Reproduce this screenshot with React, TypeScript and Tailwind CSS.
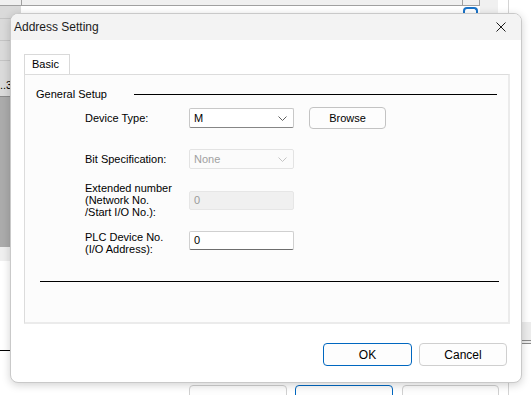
import React from "react";

const font = { fontFamily: '"Liberation Sans", Arial, sans-serif' };

const Chevron = ({ color }: { color: string }) => (
  <svg width="9" height="5" viewBox="0 0 9 5" className="shrink-0">
    <path d="M0.5 0.5 L4.5 4.5 L8.5 0.5" fill="none" stroke={color} strokeWidth="1" />
  </svg>
);

const Row = ({
  label,
  children,
  className = "",
}: {
  label: React.ReactNode;
  children: React.ReactNode;
  className?: string;
}) => (
  <div className={`flex ${className}`}>
    <div className="w-[104px] ml-[60px] leading-[12px] text-[11px] text-[#000]">{label}</div>
    {children}
  </div>
);

const Backdrop = () => (
  <>
    {/* top strip of the window behind */}
    <div className="absolute left-0 top-0 w-[480px] h-[6px] bg-[#f0f0f0] border-b border-[#a0a0a0]" />
    <div className="absolute left-[21px] top-0 w-px h-[6px] bg-[#a0a0a0]" />
    <div className="absolute left-[462px] top-0 w-px h-[6px] bg-[#a0a0a0]" />
    <div className="absolute left-[479px] top-0 w-px h-[6px] bg-[#a0a0a0]" />
    <div className="absolute left-[480px] top-0 w-[18px] h-[14px] bg-[#f0f0f0]" />
    <div className="absolute left-[463px] top-[7px] w-[15px] h-[12px] rounded-t-[4px] border-2 border-b-0 border-[#1a73c8]" />
    <div className="absolute left-[508px] top-0 w-px h-[14px] bg-[#d4d4d4]" />
    {/* left column */}
    <div className="absolute left-0 top-[6px] w-[21px] h-[91px] bg-[#dadada]" />
    <div className="absolute left-0 top-[18px] w-[21px] h-px bg-[#c4c4c4]" />
    <div className="absolute left-0 top-[40px] w-[21px] h-px bg-[#c4c4c4]" />
    <div className="absolute left-0 top-[60px] w-[21px] h-px bg-[#c4c4c4]" />
    <div className="absolute left-0 top-[96px] w-[21px] h-px bg-[#8a8a8a]" />
    <span className="absolute left-0 top-[79px] text-[11px] leading-[12px] text-black" style={font}>
      ..3
    </span>
    <div className="absolute left-0 top-[97px] w-[21px] h-[150px] bg-[#ababab]" />
    <div className="absolute left-0 top-[247px] w-[21px] h-[14px] bg-[#efefef]" />
    <div className="absolute left-0 top-[350px] w-[10px] h-px bg-black" />
    {/* right side pieces */}
    <div className="absolute left-[522px] top-[322px] w-[9px] h-[22px] bg-[#ececec]" />
    <div className="absolute left-[522px] top-[340px] w-[9px] h-px bg-[#8a8a8a]" />
    <div className="absolute left-[522px] top-[343px] w-[9px] h-px bg-[#8a8a8a]" />
    <div className="absolute left-[508px] top-[380px] w-px h-[15px] bg-[#d4d4d4]" />
    {/* buttons of the window behind */}
    <div className="absolute left-[189px] top-[385px] w-[98px] h-[14px] rounded-[4px] border border-[#d0d0d0] bg-[#fdfdfd]" />
    <div className="absolute left-[295px] top-[385px] w-[98px] h-[14px] rounded-[4px] border border-[#0067c0] bg-[#fdfdfd]" />
    <div className="absolute left-[402px] top-[385px] w-[97px] h-[14px] rounded-[4px] border border-[#d0d0d0] bg-[#fdfdfd]" />
  </>
);

export default function App() {
  return (
    <div className="relative w-[531px] h-[395px] bg-white overflow-hidden" style={font}>
      <Backdrop />

      {/* Dialog */}
      <div className="absolute left-[10px] top-[13px] w-[512px] h-[370px] rounded-[8px] border border-[#c9c9c9] bg-white shadow-[0_2px_8px_rgba(0,0,0,0.18)] overflow-hidden flex flex-col">
        {/* Title bar */}
        <div className="h-[26px] bg-[#f3f3f3] flex items-center pl-[3px] pr-[15px] shrink-0">
          <span className="text-[12px] text-[#1b1b1b]">Address Setting</span>
          <svg width="10" height="10" viewBox="0 0 10 10" className="ml-auto">
            <path d="M0.5 0.5 L9.5 9.5 M9.5 0.5 L0.5 9.5" stroke="#1b1b1b" strokeWidth="1" />
          </svg>
        </div>

        {/* Body */}
        <div className="flex-1 flex flex-col pl-[13px] pt-[14px]">
          {/* Tab */}
          <div className="w-[46px] h-[20px] border border-b-0 border-[#d9d9d9] bg-white flex items-center pl-[7px] text-[11px] text-black">
            Basic
          </div>

          {/* Tab panel */}
          <div className="w-[486px] h-[250px] border border-[#dcdcdc] border-r-2 border-b-2 border-r-[#ebebeb] border-b-[#ebebeb] bg-[#fcfcfc] flex flex-col pt-[11px] text-[11px]">
            {/* Group header */}
            <div className="flex items-center h-[16px]">
              <span className="w-[109px] pl-[11px] whitespace-nowrap text-black">General Setup</span>
              <div className="flex-1 h-px bg-black mr-[11px]" />
            </div>

            {/* Device Type */}
            <Row label="Device Type:" className="mt-[5px] items-center h-[22px]">
              <div className="w-[105px] h-[20px] bg-white border border-[#c8c8c8] border-b-[#868686] rounded-[2px] flex items-center pl-[4px] pr-[6px]">
                <span className="flex-1 text-black">M</span>
                <Chevron color="#5f5f5f" />
              </div>
              <button className="ml-[15px] w-[77px] h-[22px] rounded-[4px] border border-[#c3c3c3] bg-[#fdfdfd] text-[11px] text-black">
                Browse
              </button>
            </Row>

            {/* Bit Specification */}
            <Row label="Bit Specification:" className="mt-[20px] items-center h-[20px]">
              <div className="w-[105px] h-[20px] bg-[#fbfbfb] border border-[#e3e3e3] rounded-[2px] flex items-center pl-[4px] pr-[6px]">
                <span className="flex-1 text-[#a0a0a0]">None</span>
                <Chevron color="#c4c4c4" />
              </div>
            </Row>

            {/* Extended number */}
            <Row
              label={
                <>
                  Extended number
                  <br />
                  (Network No.
                  <br />
                  /Start I/O No.):
                </>
              }
              className="mt-[13px] items-center"
            >
              <div className="w-[105px] h-[19px] bg-[#f0f0f0] border border-[#e6e6e6] rounded-[2px] flex items-center pl-[4px] text-[#9a9a9a]">
                0
              </div>
            </Row>

            {/* PLC Device No. */}
            <Row
              label={
                <>
                  PLC Device No.
                  <br />
                  (I/O Address):
                </>
              }
              className="mt-[13px] items-start"
            >
              <div className="w-[105px] h-[19px] bg-white border border-[#d0d0d0] border-b-[#6e6e6e] rounded-[2px] flex items-center pl-[4px] text-black">
                0
              </div>
            </Row>

            <div className="mt-[26px] ml-[15px] mr-[9px] h-px bg-black" />
          </div>

          {/* Footer buttons */}
          <div className="flex justify-end gap-[7px] mt-[19px] pr-[14px]">
            <button className="w-[89px] h-[23px] rounded-[4px] border border-[#0067c0] bg-[#fdfdfd] text-[12px] text-black">
              OK
            </button>
            <button className="w-[88px] h-[23px] rounded-[4px] border border-[#cfcfcf] bg-[#fdfdfd] text-[12px] text-black">
              Cancel
            </button>
          </div>
        </div>
      </div>
    </div>
  );
}
